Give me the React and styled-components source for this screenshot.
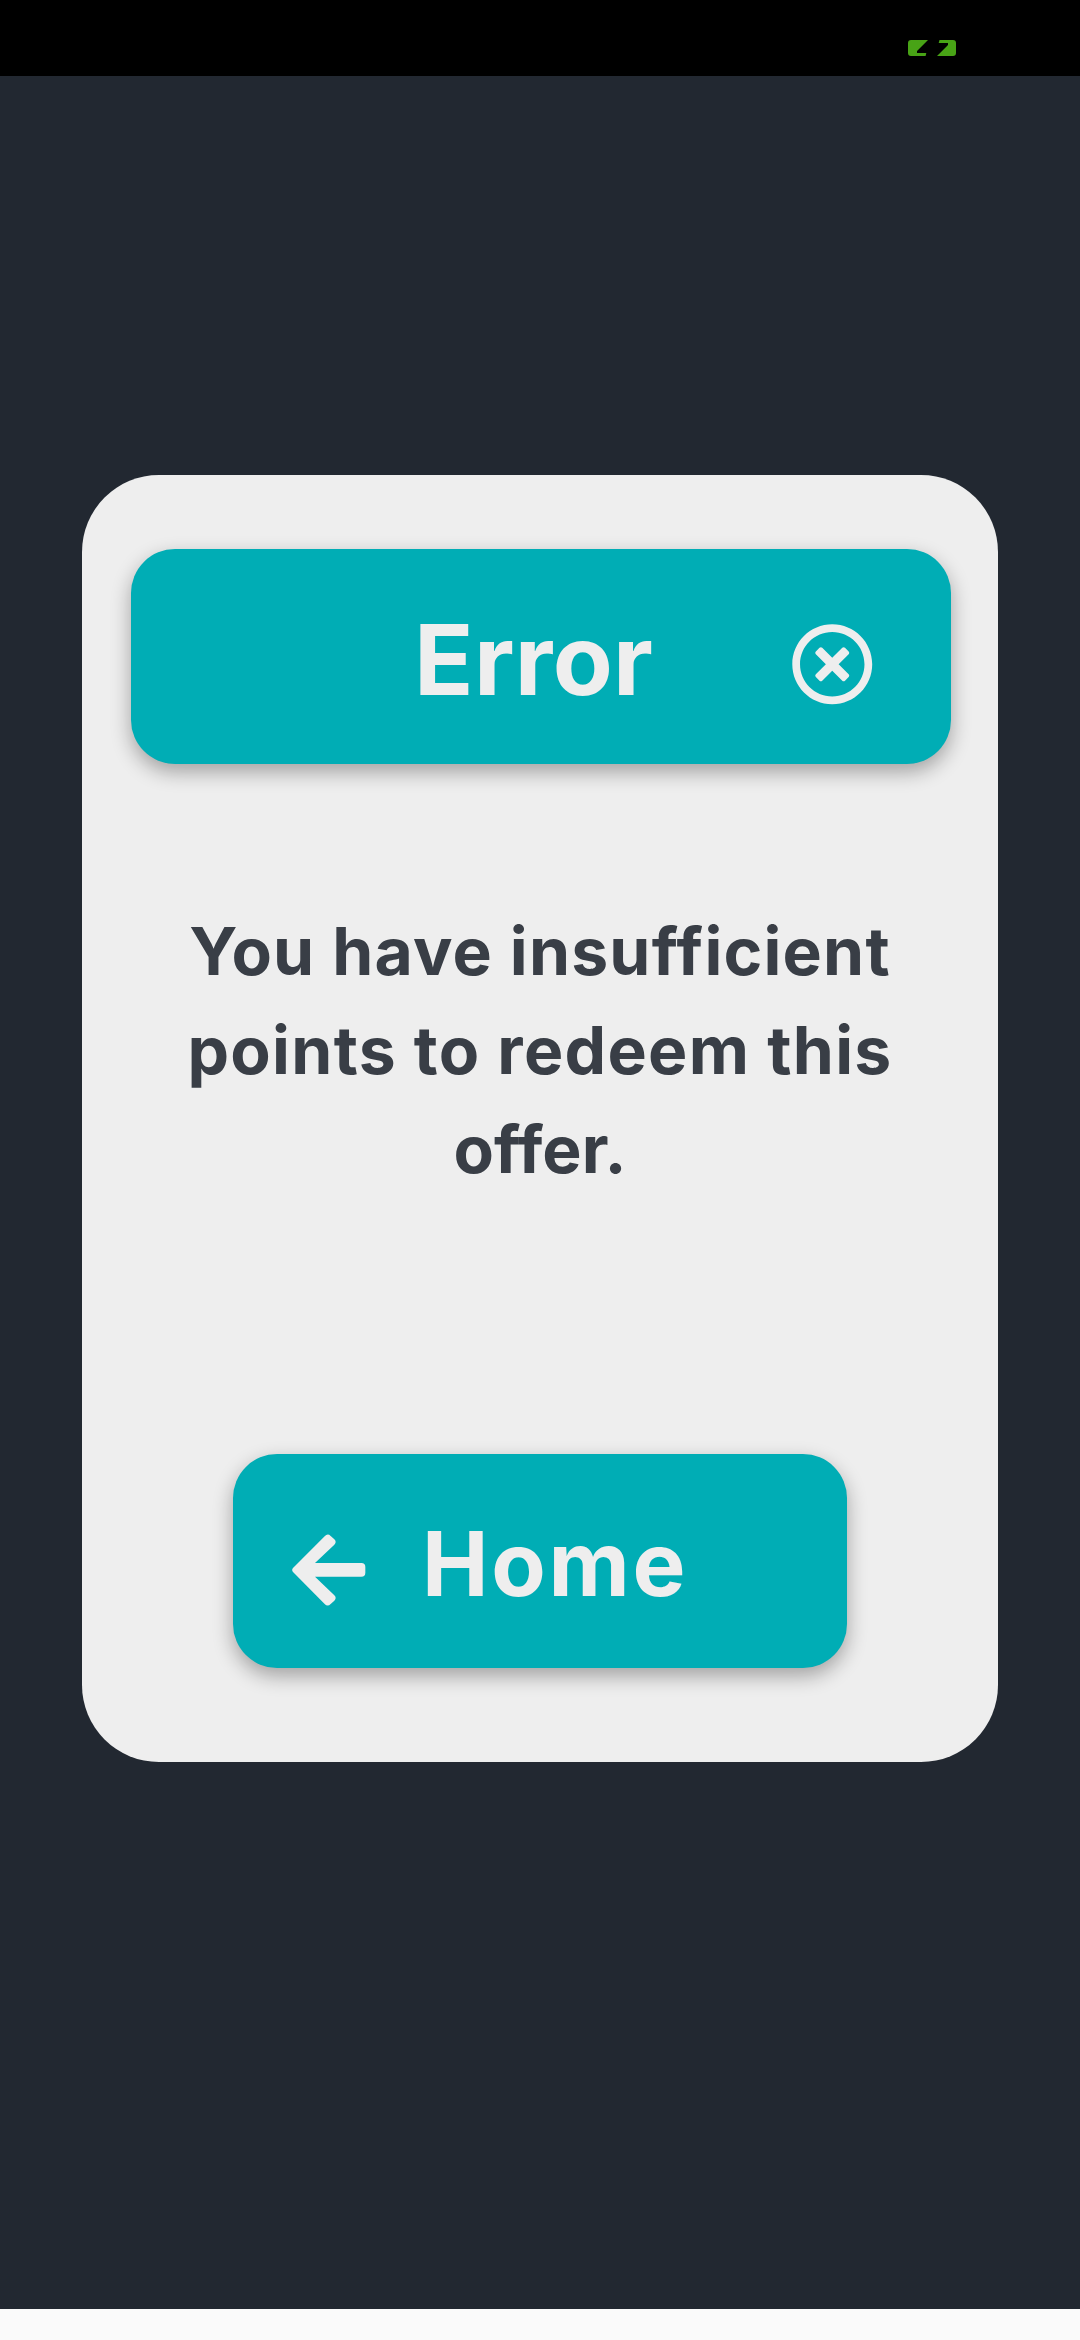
import React from "react";
import styled, { createGlobalStyle } from "styled-components";
import { FaRegTimesCircle } from "react-icons/fa";

const GlobalStyle = createGlobalStyle`
  *, *::before, *::after { box-sizing: border-box; }
  body { margin: 0; background: #fafafa; }
`;

const Screen = styled.div`
  display: flex;
  flex-direction: column;
  width: 1080px;
  height: 2340px;
  background: #fafafa;
  font-family: Inter, "Open Sans", sans-serif;
  font-weight: 700;
`;

const StatusBar = styled.header`
  display: flex;
  align-items: flex-start;
  justify-content: flex-end;
  height: 76px;
  flex: none;
  padding: 40px 124px 0 0;
  background: #000;
`;

const BatteryIcon = styled.svg`
  display: block;
  width: 48px;
  height: 16px;
  fill: #48a316;
`;

const Backdrop = styled.main`
  display: flex;
  align-items: flex-start;
  justify-content: center;
  height: 2233px;
  flex: none;
  padding-top: 398.5px;
  background: #222831;
`;

const Card = styled.section`
  display: flex;
  flex-direction: column;
  align-items: center;
  width: 915.5px;
  height: 1287px;
  padding: 74.5px 0 93.5px;
  border-radius: 77px;
  background: #eee;
`;

const Panel = styled.div`
  display: flex;
  align-items: center;
  width: ${(p) => p.$width}px;
  height: 214.5px;
  flex: none;
  border: 0;
  border-radius: 44px;
  background: #00adb5;
  color: #eee;
  font-family: inherit;
  box-shadow: 0 8px 20px rgba(0, 0, 0, 0.32);
`;

const TitleBar = styled(Panel)`
  justify-content: flex-end;
  margin-left: 2px;
  padding-right: 77px;
  gap: 138px;
`;

const HomeButton = styled(Panel)`
  margin-top: auto;
  padding-left: 59px;
  gap: 56px;
`;

const Label = styled.span`
  margin-top: 7px;
  font-size: ${(p) => p.$size}px;
  line-height: 120px;
  font-weight: 700;
  letter-spacing: ${(p) => p.$spacing}px;
  white-space: nowrap;
`;

const CloseIcon = styled(FaRegTimesCircle)`
  display: block;
  width: 82.5px;
  height: 82.5px;
  margin-top: 15px;
  flex: none;
`;

const ArrowIcon = styled.svg`
  display: block;
  width: 74px;
  height: 72px;
  margin-top: 18px;
  flex: none;
  fill: currentColor;
`;

const Message = styled.p`
  display: flex;
  flex-direction: column;
  align-items: center;
  margin: 138px 0 0;
  color: #393e46;
  font-size: 66px;
  line-height: 99px;
`;

const Line = styled.span`
  letter-spacing: ${(p) => p.$spacing}px;
  white-space: nowrap;
`;

export default function App() {
  return (
    <>
      <GlobalStyle />
      <Screen>
        <StatusBar>
          <BatteryIcon viewBox="0 0 48 16">
            <path d="M3 0H20L9 11V13H18.3L17.6 16H3Q0 16 0 13V3Q0 0 3 0Z" />
            <path d="M31.5 0H45Q48 0 48 3V13Q48 16 45 16H29L40 5V3H30.7Z" />
          </BatteryIcon>
        </StatusBar>
        <Backdrop>
          <Card>
            <TitleBar $width={819.5}>
              <Label $size={98} $spacing={0.3}>Error</Label>
              <CloseIcon />
            </TitleBar>
            <Message>
              <Line $spacing={1.2}>You have insufficient</Line>
              <Line $spacing={1.3}>points to redeem this</Line>
              <Line $spacing={0}>offer.</Line>
            </Message>
            <HomeButton as="button" type="button" $width={614}>
              <ArrowIcon viewBox="66 70 222 216">
                <path d="M69 172L164 77Q173 67 182 76L193 86Q201 94 193 102L135 157H274Q286 157 286 169V186Q286 198 274 198H135L193 254Q201 262 193 270L182 280Q173 289 164 280L69 184Q64 178 69 172Z" />
              </ArrowIcon>
              <Label $size={89} $spacing={2.7}>Home</Label>
            </HomeButton>
          </Card>
        </Backdrop>
      </Screen>
    </>
  );
}
